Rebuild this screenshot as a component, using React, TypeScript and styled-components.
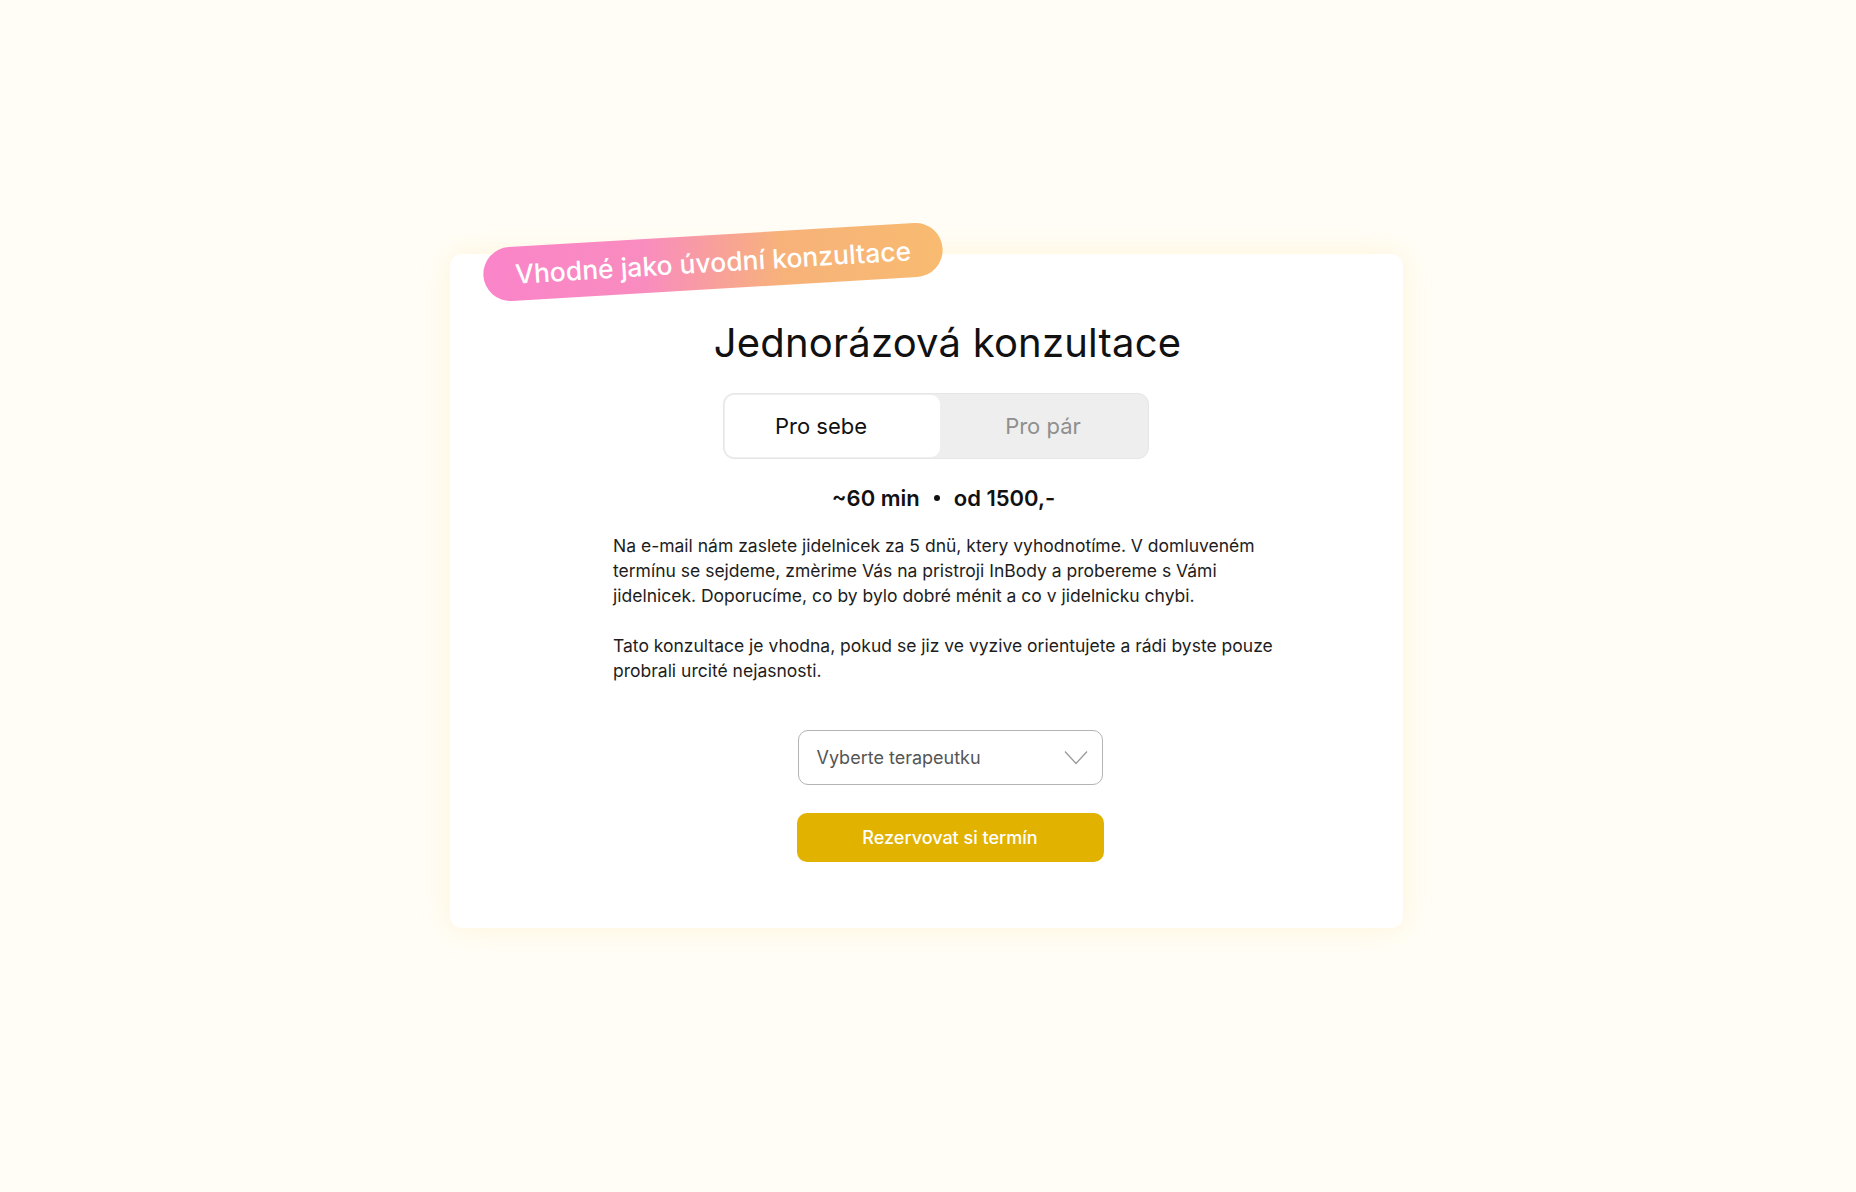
import styled, { createGlobalStyle } from "styled-components";

const GlobalStyle = createGlobalStyle`
  html, body {
    margin: 0;
    padding: 0;
    background: #fffdf6;
  }
  body {
    font-family: Inter, "Liberation Sans", sans-serif;
    color: #111;
    -webkit-font-smoothing: antialiased;
  }
`;

const Page = styled.div`
  min-height: 100vh;
  display: flex;
  justify-content: center;
  align-items: flex-start;
  padding: 254px 3px 0 0;
  box-sizing: border-box;
`;

const Card = styled.section`
  position: relative;
  width: 953px;
  box-sizing: border-box;
  padding: 65px 20px 66px 62px;
  background: #ffffff;
  border-radius: 12px;
  box-shadow: 0 0 28px rgba(250, 222, 140, 0.28);
  display: flex;
  flex-direction: column;
  align-items: center;
`;

const Badge = styled.div`
  position: absolute;
  left: 33px;
  top: -19px;
  width: 460px;
  height: 54px;
  border-radius: 27px;
  background: linear-gradient(90deg, #fa84c9 0%, #f98cbf 35%, #f7b27a 65%, #f8bb70 100%);
  transform: rotate(-3.4deg);
  display: flex;
  align-items: center;
  justify-content: center;
  color: #fff;
  font-size: 26.5px;
  font-weight: 500;
`;

const Title = styled.h1`
  margin: 0;
  font-size: 40px;
  line-height: 48px;
  font-weight: 400;
  letter-spacing: 0.2px;
  color: #111;
`;

const Toggle = styled.div`
  margin-top: 26px;
  margin-right: 24px;
  width: 426px;
  height: 66px;
  box-sizing: border-box;
  padding: 1px;
  border: 1px solid #e6e6e6;
  border-radius: 11px;
  background: #eeeeee;
  display: flex;
`;

const ToggleOption = styled.button<{ $active?: boolean }>`
  flex: ${(p) => (p.$active ? "0 0 215px" : "1")};
  border: none;
  border-radius: 9px;
  padding: 0 ${(p) => (p.$active ? "22px" : "0")} 0 0;
  background: ${(p) => (p.$active ? "#ffffff" : "transparent")};
  color: ${(p) => (p.$active ? "#111" : "#8f8f8f")};
  font-family: inherit;
  font-size: 22px;
  font-weight: 400;
  cursor: pointer;
`;

const Meta = styled.div`
  margin-top: 26px;
  margin-right: 8px;
  display: flex;
  align-items: center;
  gap: 14px;
  font-size: 22px;
  line-height: 26px;
  font-weight: 600;
  color: #111;
`;

const Dot = styled.span`
  width: 6px;
  height: 6px;
  border-radius: 50%;
  background: #111;
`;

const Description = styled.div`
  margin-top: 22px;
  margin-right: 1px;
  width: 668px;
  font-size: 17.5px;
  line-height: 25px;
  color: #1d1d1d;

  p {
    margin: 0;
  }
  p + p {
    margin-top: 25px;
  }
`;

const Select = styled.div`
  margin-top: 47px;
  margin-left: 5px;
  width: 305px;
  height: 55px;
  box-sizing: border-box;
  border: 1px solid #b4b4b4;
  border-radius: 10px;
  padding: 0 14px 0 18px;
  display: flex;
  align-items: center;
  justify-content: space-between;
  font-size: 18px;
  color: #555;
`;

const ReserveButton = styled.button`
  margin-top: 28px;
  margin-left: 5px;
  width: 307px;
  height: 49px;
  border: none;
  border-radius: 10px;
  background: #e1b200;
  color: #fff;
  font-family: inherit;
  font-size: 18px;
  font-weight: 500;
  cursor: pointer;
`;

const Chevron = () => (
  <svg width="24" height="15" viewBox="0 0 24 15" fill="none">
    <polyline points="1,1.5 12,13.5 23,1.5" stroke="#9a9a9a" strokeWidth="1.3" />
  </svg>
);

export default function App() {
  return (
    <>
      <GlobalStyle />
      <Page>
        <Card>
          <Badge>Vhodné jako úvodní konzultace</Badge>
          <Title>Jednorázová konzultace</Title>
          <Toggle>
            <ToggleOption $active>Pro sebe</ToggleOption>
            <ToggleOption>Pro pár</ToggleOption>
          </Toggle>
          <Meta>
            <span>~60 min</span>
            <Dot />
            <span>od 1500,-</span>
          </Meta>
          <Description>
            <p>
              Na e-mail nám zaslete jidelnicek za 5 dnü, ktery vyhodnotíme. V domluveném
              <br />
              termínu se sejdeme, zmèrime Vás na pristroji InBody a probereme s Vámi
              <br />
              jidelnicek. Doporucíme, co by bylo dobré ménit a co v jidelnicku chybi.
            </p>
            <p>
              Tato konzultace je vhodna, pokud se jiz ve vyzive orientujete a rádi byste pouze
              <br />
              probrali urcité nejasnosti.
            </p>
          </Description>
          <Select>
            <span>Vyberte terapeutku</span>
            <Chevron />
          </Select>
          <ReserveButton>Rezervovat si termín</ReserveButton>
        </Card>
      </Page>
    </>
  );
}
